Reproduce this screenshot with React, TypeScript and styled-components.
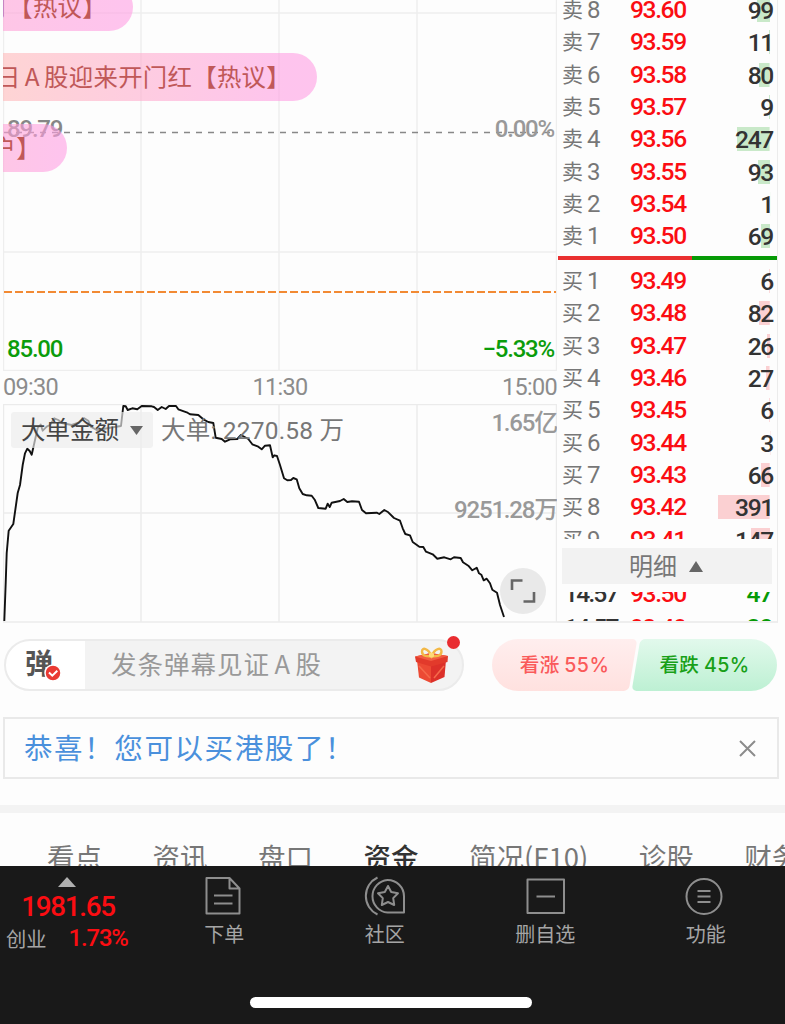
import React from 'react';
import styled, { createGlobalStyle, css } from 'styled-components';

const GlobalStyle = createGlobalStyle`
  * { box-sizing: border-box; }
  body { margin: 0; background: #fdfdfd; }
`;

const cjk = css`font-family: 'Noto Sans CJK SC', sans-serif;`;
const num = css`font-family: Roboto, 'Noto Sans CJK SC', sans-serif;`;

const Page = styled.div`
  ${cjk}
  width: 785px;
  height: 1024px;
  overflow: hidden;
  display: flex;
  flex-direction: column;
  background: #fdfdfd;
  color: #666;
  white-space: nowrap;
`;

const Market = styled.section`
  display: flex;
  height: 623px;
  padding-left: 3px;
`;

const Charts = styled.div`
  width: 554px;
  display: flex;
  flex-direction: column;
`;

const ChartPanel = styled.div<{ $h: number }>`
  position: relative;
  height: ${p => p.$h}px;
  overflow: hidden;
  > svg { display: block; }
`;

const Bubble = styled.div<{ $top: number; $w: number; $from?: string }>`
  position: absolute;
  left: 0;
  top: ${p => p.$top}px;
  width: ${p => p.$w}px;
  height: 48px;
  padding: 0 26px 3px 0;
  display: flex;
  justify-content: flex-end;
  align-items: center;
  overflow: hidden;
  border-radius: 0 24px 24px 0;
  background: linear-gradient(90deg, ${p => p.$from || 'rgba(255,162,215,.6)'}, rgba(255,158,227,.6) 90%);
  color: #c05858;
  font-size: 24.4px;
  letter-spacing: 0.3px;
  word-spacing: -1.6px;
`;

const ChartLabel = styled.span<{ $top: number; $side: 'left' | 'right'; $color?: string; $inset?: number }>`
  ${num}
  position: absolute;
  top: ${p => p.$top}px;
  ${p => p.$side}: ${p => p.$inset ?? 3}px;
  line-height: 30px;
  font-size: 24px;
  font-weight: 500;
  letter-spacing: -1.2px;
  color: ${p => p.$color || '#999'};
`;

const TimeAxis = styled.div`
  ${num}
  height: 33px;
  padding-bottom: 1px;
  display: flex;
  justify-content: space-between;
  align-items: center;
  font-size: 23.5px;
  letter-spacing: -0.7px;
  color: #8c8c8c;
`;

const Selector = styled.div`
  position: absolute;
  left: 8px;
  top: 8px;
  width: 142px;
  height: 36px;
  border-radius: 3px;
  background: rgba(236, 236, 236, 0.65);
  display: flex;
  align-items: center;
  gap: 11px;
  padding-left: 10px;
  font-size: 24.5px;
  line-height: 33px;
  color: #444;
  > span { margin-top: -3px; }
`;

const BigOrder = styled.div`
  ${num}
  position: absolute;
  left: 158px;
  top: 8px;
  line-height: 37px;
  font-size: 24.5px;
  letter-spacing: 0.2px;
  color: #777;
`;

const Expand = styled.div`
  position: absolute;
  left: 497px;
  top: 164px;
  width: 46px;
  height: 46px;
  border-radius: 50%;
  background: #e9e9e9;
  display: grid;
  place-items: center;
`;

const Book = styled.div`
  width: 221px;
  padding-left: 1px;
  display: flex;
  flex-direction: column;
  border-right: 1px solid #ececec;
  border-bottom: 2px solid #eeeeee;
`;

const Sells = styled.div`
  height: 256px;
  padding-bottom: 3.5px;
  overflow: hidden;
  display: flex;
  flex-direction: column;
  justify-content: flex-end;
`;

const Buys = styled.div`
  height: 279px;
  padding-top: 4.8px;
  overflow: hidden;
`;

const Ratio = styled.div`
  flex: none;
  height: 4px;
  background: linear-gradient(90deg, #e93030 0 134px, #069a06 134px);
`;

const BookRow = styled.div`
  flex: none;
  height: 32.33px;
  display: flex;
  align-items: center;
  padding: 0 4px 0 4px;
`;

const Level = styled.span`
  ${num}
  width: 68px;
  font-size: 24px;
  line-height: 32px;
  color: #777;
  display: flex;
  gap: 5px;
  > b { ${cjk} font-weight: 400; font-size: 21px; line-height: 29px; width: 20px; }
`;

const Price = styled.span`
  ${num}
  flex: 1;
  font-size: 24.6px;
  font-weight: 500;
  line-height: 32px;
  letter-spacing: -1.4px;
  color: #fb0d12;
`;

const Qty = styled.span<{ $tint: string; $bar: number }>`
  ${num}
  width: 70px;
  height: 24px;
  line-height: 25px;
  text-align: right;
  font-size: 24.6px;
  font-weight: 500;
  letter-spacing: -1.3px;
  color: #333;
  background: linear-gradient(${p => p.$tint}, ${p => p.$tint}) no-repeat right 3px top 0 / ${p => p.$bar}px 24px;
`;

const DetailButton = styled.div`
  flex: none;
  margin: 9px 5px 8px 4px;
  height: 36px;
  background: #f2f2f2;
  display: flex;
  align-items: center;
  justify-content: center;
  gap: 12px;
  padding-right: 2px;
  font-size: 24px;
  line-height: 32px;
  color: #777;
  > span { margin-top: -3px; }
`;

const Trades = styled.div`
  ${num}
  height: 29px;
  overflow: hidden;
  font-size: 24.6px;
  font-weight: 500;
`;

const Trade = styled.div`
  display: flex;
  height: 34px;
  margin-top: -15px;
  & + & { margin-top: 0; }
  line-height: 34px;
  padding: 0 5px 0 6px;
  > :nth-child(1) { width: 66px; color: #333; letter-spacing: -1.7px; }
  > :nth-child(2) { flex: 1; color: #fb0d12; letter-spacing: -1.4px; }
  > :nth-child(3) { color: #069a06; letter-spacing: -1.2px; }
`;

const Actions = styled.section`
  height: 52px;
  margin: 16px 8px 0 4px;
  display: flex;
  justify-content: space-between;
`;

const CommentBox = styled.div`
  position: relative;
  width: 460px;
  height: 52px;
  border: 2px solid #ebebeb;
  border-radius: 26px;
  background: linear-gradient(90deg, #fff 79px, #f3f3f3 79px);
  display: flex;
  align-items: center;
`;

const DanmuToggle = styled.div`
  position: relative;
  width: 79px;
  height: 48px;
  padding-left: 19px;
  font-size: 28px;
  font-weight: 700;
  line-height: 43px;
  color: #555;
  > svg { position: absolute; left: 38px; top: 23px; }
`;

const Placeholder = styled.span`
  flex: 1;
  padding-left: 26px;
  font-size: 25.5px;
  line-height: 36px;
  margin-top: -4px;
  letter-spacing: 1px;
  word-spacing: -2.2px;
  color: #999;
`;

const Gift = styled.svg`
  flex: none;
  margin-right: 13px;
`;

const Dot = styled.i`
  position: absolute;
  right: 2px;
  top: -5px;
  width: 13px;
  height: 13px;
  border-radius: 50%;
  background: #e92c30;
`;

const Votes = styled.div`
  display: flex;
  width: 285px;
`;

const Vote = styled.div<{ $up?: boolean }>`
  position: relative;
  isolation: isolate;
  width: 145px;
  margin-left: ${p => (p.$up ? 0 : -5)}px;
  flex: none;
  height: 52px;
  overflow: hidden;
  border-radius: ${p => (p.$up ? '26px 0 0 26px' : '0 26px 26px 0')};
  font-family: Inter, 'Noto Sans CJK SC', sans-serif;
  font-size: 19.6px;
  font-weight: 500;
  line-height: 52px;
  text-align: center;
  letter-spacing: 0.4px;
  word-spacing: -1px;
  color: ${p => (p.$up ? '#fa5a5a' : '#18a018')};
  &::before {
    content: '';
    position: absolute;
    z-index: -1;
    inset: 0 ${p => (p.$up ? '4px 0 -20px' : '-20px 0 4px')};
    border-radius: 5px;
    transform: skewX(-9.5deg);
    background: ${p => (p.$up ? 'linear-gradient(#ffeeee, #ffe1df)' : 'linear-gradient(#e2f9ec, #bdf0d3)')};
  }
`;

const Notice = styled.section`
  height: 62px;
  margin: 26px 6px 0 3px;
  border: 2px solid #e9e9e9;
  padding: 0 21px 0 19px;
  display: flex;
  align-items: center;
  justify-content: space-between;
  font-size: 28.5px;
  line-height: 40px;
  letter-spacing: 1.6px;
  color: #4a90dc;
  > span { margin-top: -3px; }
`;

const Band = styled.div`
  height: 8px;
  margin-top: 26px;
  background: #f3f3f3;
`;

const Tabs = styled.nav`
  height: 53px;
  overflow: hidden;
  display: flex;
  gap: 50.5px;
  padding: 23px 0 0 47px;
  font-size: 27.5px;
  line-height: 40px;
  color: #777;
`;

const Tab = styled.span<{ $active?: boolean }>`
  flex: none;
  ${p => p.$active && 'color: #333; font-weight: 500;'}
`;

const BottomBar = styled.footer`
  position: relative;
  height: 158px;
  background: #191919;
  display: flex;
  color: #a5a5a5;
`;

const IndexBox = styled.div`
  width: 143px;
  padding-top: 11px;
  display: flex;
  flex-direction: column;
  > svg { margin-left: 58px; }
`;

const IndexValue = styled.div`
  ${num}
  width: 136px;
  text-align: center;
  font-size: 27.8px;
  font-weight: 500;
  line-height: 39px;
  letter-spacing: -1.3px;
  color: #fb0d12;
`;

const IndexChange = styled.div`
  display: flex;
  align-items: center;
  gap: 22px;
  padding-left: 6px;
  font-size: 20.3px;
  line-height: 24px;
  > b { ${num} font-size: 23.8px; font-weight: 500; letter-spacing: -1.1px; color: #fb0d12; }
`;

const NavItem = styled.div`
  width: 160.5px;
  padding-top: 10px;
  display: flex;
  flex-direction: column;
  align-items: center;
  font-size: 20px;
  line-height: 32px;
  > svg { display: block; }
  > span { padding-left: 2px; }
`;

const HomeIndicator = styled.div`
  position: absolute;
  left: 250px;
  bottom: 16px;
  width: 282px;
  height: 11px;
  border-radius: 6px;
  background: #fff;
`;

const sells: [number, string, number][] = [
  [8, '93.60', 99], [7, '93.59', 11], [6, '93.58', 80], [5, '93.57', 9],
  [4, '93.56', 247], [3, '93.55', 93], [2, '93.54', 1], [1, '93.50', 69],
];
const buys: [number, string, number][] = [
  [1, '93.49', 6], [2, '93.48', 82], [3, '93.47', 26], [4, '93.46', 27], [5, '93.45', 6],
  [6, '93.44', 3], [7, '93.43', 66], [8, '93.42', 391], [9, '93.41', 147],
];
const trades = [['14:57', '93.50', '47'], ['14:57', '93.49', '20']];

const flow =
  '4.3,621 5.7,583 6.7,553 8.7,530.7 13.3,524 17.7,493 20,485 22.7,465 25,453.3 27.3,448.7 29.7,451 31.7,454.7 35,440 37.7,428 40.7,424.5 42.7,430.7 46.7,426.7 50,425 54.3,418.3 58.3,420 61.7,423 71.7,425 78.3,422.7 84.3,418.3 88.3,420.7 90.7,426.7 96.7,430 103,429 113,427.3 121,426 123.3,406 125.7,406.3 127.7,410 132.3,408.3 137.3,409.3 141.7,406 151.7,406.3 154,407 157.7,410 161.7,407 165.7,409 169,406 176,406 178.3,409.3 186.7,412.3 190,414.3 198.3,415 203.3,419.3 208.3,422 213.3,423 215.7,437.7 221.7,439 225,441.7 230,439.3 237.3,439 241,435 248.3,439 252.3,444.3 258.3,446.7 261.7,449.3 265,445.7 270,445.3 272.7,457.3 274.3,455.3 277,456 280,465 284,478.3 287.3,480.3 291,480 293.3,478 296.7,479.3 299.3,488.3 302.7,494 306.7,495.3 311.7,495.7 314.7,499.7 318.3,508 325.7,508.7 327.7,503.7 329.7,507 331.7,502.7 340,501 343.7,499 347.3,502 352,501.3 359,501.7 362,510 366,513.3 376.7,512.7 379.3,514 384.3,510 388.3,512.3 394,518 400,520.7 402.7,528.3 405.3,534 410,535.3 412.7,542 419.3,546.7 423.3,547 426,551.7 432.7,554.3 437.3,558.7 444.3,557.3 450.7,559.3 454,557.3 460.7,558 463,562.3 468.3,565.7 472.3,570.3 476.7,567.7 479,573.3 481.3,574.7 483.7,580.3 486.7,578.7 490,583.3 492.3,589.7 497,592.7 500,605 504,617';

const BookLine = ({ side, row }: { side: '卖' | '买'; row: [number, string, number] }) => (
  <BookRow>
    <Level><b>{side}</b>{row[0]}</Level>
    <Price>{row[1]}</Price>
    <Qty $tint={side === '卖' ? '#c9e9c9' : '#fbd0d2'} $bar={row[2] * 0.132}>{row[2]}</Qty>
  </BookRow>
);

export default function App() {
  return (
    <>
      <GlobalStyle />
      <Page>
        <Market>
          <Charts>
            <ChartPanel $h={371}>
              <Bubble $top={-17} $w={130}>月【热议】</Bubble>
              <Bubble $top={53} $w={314} $from="rgba(255,185,185,.6)">日 A 股迎来开门红【热议】</Bubble>
              <ChartLabel $top={114} $side="left" $inset={4} $color="#868686">89.79</ChartLabel>
              <Bubble $top={123.5} $w={64}>户】</Bubble>
              <ChartLabel $top={114} $side="right">0.00%</ChartLabel>
              <ChartLabel $top={334} $side="left" $inset={4} $color="#0b9c0b">85.00</ChartLabel>
              <ChartLabel $top={334} $side="right" $color="#0b9c0b">−5.33%</ChartLabel>
              <svg width="554" height="371" viewBox="3 0 554 371" fill="none">
                <path d="M3.5 0V371M141 0V371M279 0V371M417 0V371M556.5 0V371M3 13H557M3 252H557M3 370.5H557" stroke="#000" strokeOpacity=".06" strokeWidth="1.5" />
                <path d="M4 132.5H556" stroke="#888" strokeWidth="1.4" strokeDasharray="6 6" />
                <path d="M4 292H556" stroke="#f28a33" strokeWidth="2.2" strokeDasharray="8 3" />
              </svg>
            </ChartPanel>
            <TimeAxis><span>09:30</span><span>11:30</span><span>15:00</span></TimeAxis>
            <ChartPanel $h={219}>
              <svg width="554" height="219" viewBox="3 404 554 219" fill="none">
                <path d="M3.5 404V622M141 404V622M279 404V622M417 404V622M556.5 404V622M3 404.5H557M3 513H557M3 622H557" stroke="#000" strokeOpacity=".07" strokeWidth="1.5" />
                <polyline points={flow} stroke="#111" strokeWidth="1.9" strokeLinejoin="round" />
              </svg>
              <Selector>
                <span>大单金额</span>
                <svg width="13" height="9" viewBox="0 0 13 9"><path d="M0 0H13L6.5 9Z" fill="#666" /></svg>
              </Selector>
              <BigOrder>大单: 2270.58 万</BigOrder>
              <ChartLabel $top={4} $side="right" $inset={0}>1.65亿</ChartLabel>
              <ChartLabel $top={91} $side="right" $inset={0}>9251.28万</ChartLabel>
              <Expand>
                <svg width="26" height="26" viewBox="0 0 26 26" fill="none" stroke="#666" strokeWidth="2.6">
                  <path d="M2 12V2.500H12.500M24 14V23.500H13.500" />
                </svg>
              </Expand>
            </ChartPanel>
          </Charts>
          <Book>
            <Sells>{sells.map(r => <BookLine key={r[0]} side="卖" row={r} />)}</Sells>
            <Ratio />
            <Buys>{buys.map(r => <BookLine key={r[0]} side="买" row={r} />)}</Buys>
            <DetailButton>
              <span>明细</span>
              <svg width="14" height="11" viewBox="0 0 14 11"><path d="M7 0L14 11H0Z" fill="#666" /></svg>
            </DetailButton>
            <Trades>
              {trades.map((t, i) => <Trade key={i}>{t.map(v => <span key={v}>{v}</span>)}</Trade>)}
            </Trades>
          </Book>
        </Market>

        <Actions>
          <CommentBox>
            <DanmuToggle>
              弹
              <svg width="18" height="18" viewBox="0 0 18 18" fill="none">
                <circle cx="9" cy="9" r="8" fill="#ea3a33" stroke="#fff" strokeWidth="1.5" />
                <path d="M5 8.500L8.300 11.700L13.300 6.800" stroke="#fff" strokeWidth="2" />
              </svg>
            </DanmuToggle>
            <Placeholder>发条弹幕见证 A 股</Placeholder>
            <Gift width="35" height="37" viewBox="0 0 35 37">
              <path d="M3 13L17 17V36L5 30.500Z" fill="#ec4a34" />
              <path d="M17 17L32 13L30.500 30L17 36Z" fill="#dc3029" />
              <path d="M5 19L16 31M20 31L30 19" stroke="#f4694a" strokeWidth="1.6" />
              <path d="M1 9.500L17 6L34 9L33.500 15L17 19.500L2 15Z" fill="#e23a2b" />
              <path d="M1 9.500L17 6L34 9L17 14Z" fill="#f25c42" />
              <path d="M17.500 9C14 1 8 0 8 4.500C8 9.500 14 9.500 17.500 9C21 9.500 27.500 9.500 27.500 4.500C27.500 0 21 1 17.500 9Z" fill="none" stroke="#f3b846" strokeWidth="2.4" />
              <circle cx="17.500" cy="8" r="2.600" fill="#ffd977" />
            </Gift>
            <Dot />
          </CommentBox>
          <Votes>
            <Vote $up>看涨 55%</Vote>
            <Vote>看跌 45%</Vote>
          </Votes>
        </Actions>

        <Notice>
          <span>恭喜！您可以买港股了！</span>
          <svg width="17" height="17" viewBox="0 0 17 17" stroke="#8c8c8c" strokeWidth="2"><path d="M1 1L16 16M16 1L1 16" /></svg>
        </Notice>

        <Band />
        <Tabs>
          <Tab>看点</Tab><Tab>资讯</Tab><Tab>盘口</Tab><Tab $active>资金</Tab>
          <Tab>简况(F10)</Tab><Tab>诊股</Tab><Tab>财务</Tab>
        </Tabs>

        <BottomBar>
          <IndexBox>
            <svg width="18" height="10" viewBox="0 0 18 10"><path d="M9 0L18 10H0Z" fill="#b0b0b0" /></svg>
            <IndexValue>1981.65</IndexValue>
            <IndexChange>创业<b>1.73%</b></IndexChange>
          </IndexBox>
          <NavItem>
            <svg width="42" height="42" viewBox="0 0 42 42" fill="none" stroke="#8e8e8e" strokeWidth="2" strokeLinejoin="round">
              <path d="M4.500 2H27.500L37.500 12.500V37.500H4.500ZM27.500 2V12.500H37.500M12 19.500H30.500M12 27.500H30.500" />
            </svg>
            <span>下单</span>
          </NavItem>
          <NavItem>
            <svg width="42" height="42" viewBox="0 0 42 42" fill="none" stroke="#8e8e8e" strokeWidth="2" strokeLinejoin="round">
              <path d="M14.500 1.500A20.500 20.500 0 0 0 14.500 38.500M24.500 4A16.300 16.300 0 0 0 24.500 36.500H41V20.500A16.400 16.400 0 0 0 24.500 4Z" />
              <path d="M25 10L28.200 16L35 17.200L30.200 22.100L31.200 29L25 26L18.800 29L19.800 22.100L15 17.200L21.800 16Z" />
            </svg>
            <span>社区</span>
          </NavItem>
          <NavItem>
            <svg width="42" height="42" viewBox="0 0 42 42" fill="none" stroke="#8e8e8e" strokeWidth="2" strokeLinejoin="round">
              <path d="M4.500 3.500H41V37H4.500ZM13.500 20.500H32" />
            </svg>
            <span>删自选</span>
          </NavItem>
          <NavItem>
            <svg width="42" height="42" viewBox="0 0 42 42" fill="none" stroke="#8e8e8e" strokeWidth="2">
              <circle cx="20" cy="20.500" r="17.500" />
              <path d="M13.500 15H26.500M13.500 20.500H26.500M13.500 26H26.500" />
            </svg>
            <span>功能</span>
          </NavItem>
          <HomeIndicator />
        </BottomBar>
      </Page>
    </>
  );
}
